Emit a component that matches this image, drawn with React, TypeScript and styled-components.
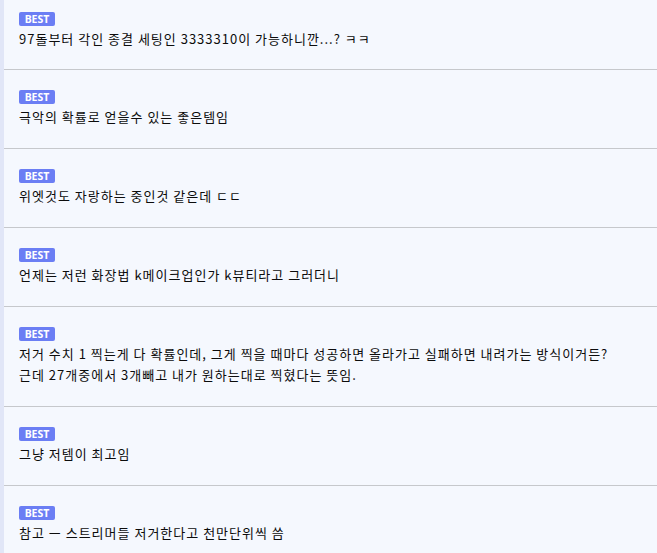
import React from "react";
import styled, { createGlobalStyle } from "styled-components";

const Global = createGlobalStyle`
  html, body { margin: 0; padding: 0; background: #f5f8fe; }
  body { font-family: "Noto Sans CJK KR", "Noto Sans", sans-serif; }
`;

const Page = styled.div`
  display: flex;
  min-height: 553px;
  background: #f5f8fe;
`;

const SideBar = styled.div`
  width: 4px;
  flex: none;
  background: #e1e6f7;
`;

const List = styled.ul`
  list-style: none;
  margin: 0;
  padding: 0;
  flex: 1;
`;

const Row = styled.li`
  display: flex;
  flex-direction: column;
  align-items: flex-start;
  padding: 20px 19px 21px 15px;
  border-bottom: 1px solid #c6c8cc;
  &:first-child { padding-top: 12px; padding-bottom: 20px; }
  &:last-child { border-bottom: none; }
`;

const Badge = styled.span`
  display: flex;
  align-items: center;
  justify-content: center;
  height: 14px;
  width: 36px;
  border-radius: 2px;
  background: #6b7ef4;
  color: #fff;
  font-family: "Noto Sans", "Open Sans", sans-serif;
  font-weight: 700;
  font-size: 10.5px;
  line-height: 14px;
`;

const Text = styled.p`
  margin: 2px 0 0;
  font-size: 13px;
  letter-spacing: 1px;
  line-height: 21px;
  color: #0c0c0c;
  white-space: pre-line;
`;

const comments = [
  "97돌부터 각인 종결 세팅인 3333310이 가능하니깐...? ㅋㅋ",
  "극악의 확률로 얻을수 있는 좋은템임",
  "위엣것도 자랑하는 중인것 같은데 ㄷㄷ",
  "언제는 저런 화장법 k메이크업인가 k뷰티라고 그러더니",
  "저거 수치 1 찍는게 다 확률인데, 그게 찍을 때마다 성공하면 올라가고 실패하면 내려가는 방식이거든?\n근데 27개중에서 3개빼고 내가 원하는대로 찍혔다는 뜻임.",
  "그냥 저템이 최고임",
  "참고 ㅡ 스트리머들 저거한다고 천만단위씩 씀",
];

export default function App() {
  return (
    <>
      <Global />
      <Page>
        <SideBar />
        <List>
          {comments.map((c, i) => (
            <Row key={i}>
              <Badge>BEST</Badge>
              <Text>{c}</Text>
            </Row>
          ))}
        </List>
      </Page>
    </>
  );
}
